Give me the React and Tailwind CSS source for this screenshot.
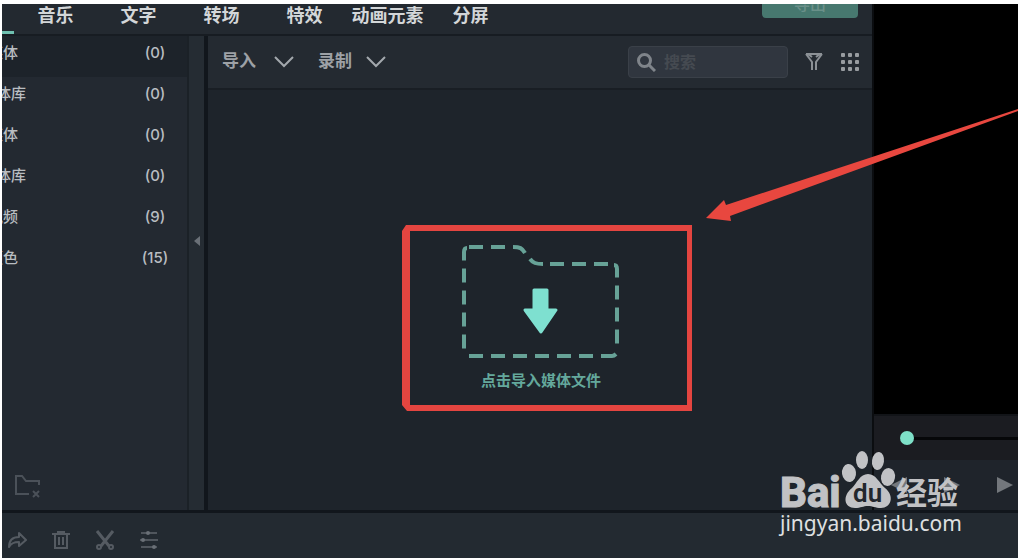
import React, { useState } from 'react'

const tabs = ['音乐', '文字', '转场', '特效', '动画元素', '分屏'];

const folders = [
  { name: '媒体', count: 0 },
  { name: '媒体库', count: 0 },
  { name: '媒体', count: 0 },
  { name: '媒体库', count: 0 },
  { name: '视频', count: 9 },
  { name: '颜色', count: 15 }
];

const Chevron = () => (
  <svg width="20" height="12" viewBox="0 0 20 12" fill="none" stroke="#a3a8ad" strokeWidth="2">
    <path d="M1 1l9 9 9-9" />
  </svg>
);

const Sidebar = () => {
  const [active, setActive] = useState(0);

  return (
    <aside className="w-[187px] shrink-0 flex flex-col justify-between bg-[#232931] border-r-2 border-[#1b2127]">
      <div>
        {folders.map((folder, i) => (
          <button
            key={i}
            onClick={() => setActive(i)}
            className={`w-full h-[41px] pb-[6px] flex items-center justify-between text-[15px] font-medium text-[#b9bdc1] ${active === i ? 'bg-[#1d232a]' : ''}`}
          >
            <span className={`${folder.name.length > 2 ? 'w-6' : 'w-4'} flex justify-end overflow-hidden whitespace-nowrap`}>
              {folder.name}
            </span>
            <span className="w-16 text-center">({folder.count})</span>
          </button>
        ))}
      </div>

      <button aria-label="删除文件夹" className="ml-3 mb-3 w-fit">
        <svg width="28" height="24" viewBox="0 0 28 24" fill="none" stroke="#4b5159" strokeWidth="2">
          <path d="M15 20H2V2h6l4 5h13v4" />
          <path d="M19 17l6 6M25 17l-6 6" />
        </svg>
      </button>
    </aside>
  );
};

const DropZone = () => (
  <div className="flex-1 flex items-center justify-center pt-9 pl-[2px] bg-[#1e242b]">
    <button className="flex flex-col items-center gap-3 text-[15px] leading-5 font-bold text-[#64a89c]">
      <svg width="158" height="114" viewBox="0 0 158 114" fill="none">
        <g stroke="#67a297" strokeWidth="4" strokeDasharray="14 8">
          <path d="M7 2H50" />
          <path d="M51 2C58 2 60 3 63 8M68 14C71 18 74 19 81 19" strokeDasharray="none" />
          <path d="M88 19H150" />
          <path d="M152 20Q155 20 155 24V104" />
          <path d="M7 111H138" />
          <path d="M139 111H150Q152 111 154 109" strokeDasharray="none" />
          <path d="M5 3Q2 3 2 7V106" />
        </g>
        <path
          d="M72 45h13v20h9L79 87 63 65h9z"
          fill="#7ee0d0" stroke="#7ee0d0" strokeWidth="3" strokeLinejoin="round"
        />
      </svg>
      <span>点击导入媒体文件</span>
    </button>
  </div>
);

const MediaPanel = () => (
  <main className="flex-1 flex flex-col">
    <div className="h-[54px] pl-[14px] pr-3 flex items-center bg-[#242a31] border-b-2 border-[#191e24] text-[17px] font-bold text-[#9da1a6]">
      <button className="flex items-center gap-[18px]">导入 <Chevron /></button>
      <button className="ml-6 flex items-center gap-[14px]">录制 <Chevron /></button>

      <label className="ml-auto w-40 h-8 pl-2 flex items-center gap-2 rounded bg-[#30363f] border border-[#3a4048]">
        <svg className="shrink-0" width="19" height="19" viewBox="0 0 19 19" fill="none" stroke="#7f848a" strokeWidth="3">
          <circle cx="7.500" cy="7.500" r="6" />
          <path d="M12 12l6 6" />
        </svg>
        <input
          type="search"
          aria-label="搜索"
          placeholder="搜索"
          className="w-full min-w-0 bg-transparent outline-none text-base placeholder:text-[#454a51]"
        />
      </label>

      <button aria-label="筛选" className="ml-4">
        <svg width="20" height="20" viewBox="0 0 20 20" fill="none" stroke="#8c9196" strokeWidth="2">
          <path d="M2 2h16M2 2l6 8v8M18 2l-6 8v8M4 2l4 3M16 2l-4 3" />
        </svg>
      </button>
      <button aria-label="网格视图" className="ml-4">
        <svg width="20" height="20" viewBox="0 0 20 20" fill="#989ca0">
          {[3, 10, 17].map((y) => [3, 10, 17].map((x) => (
            <rect key={`${x}-${y}`} x={x - 2} y={y - 2} width="4" height="4" rx="1" />
          )))}
        </svg>
      </button>
    </div>

    <DropZone />
  </main>
);

const Play = ({ flip }) => (
  <svg width="18" height="16" viewBox="0 0 18 16" fill="#73777c">
    <path d={flip ? 'M17 0v16L1 8z' : 'M1 0v16l16-8z'} />
  </svg>
);

const Preview = () => {
  const [position, setPosition] = useState(0);

  return (
    <section className="w-[146px] shrink-0 flex flex-col overflow-hidden border-l-2 border-[#0b0d10] bg-[#1f242b]">
      <div className="flex-1 bg-black"></div>
      <div className="h-[46px] pl-[26px] flex items-center bg-[#1b1c21] border-t-2 border-[#121418]">
        <input
          type="range"
          aria-label="播放进度"
          value={position}
          onChange={(e) => setPosition(e.target.value)}
          className="w-full h-4 appearance-none bg-transparent [&::-webkit-slider-runnable-track]:h-[3px] [&::-webkit-slider-runnable-track]:bg-[#060709] [&::-webkit-slider-thumb]:appearance-none [&::-webkit-slider-thumb]:w-[14px] [&::-webkit-slider-thumb]:h-[14px] [&::-webkit-slider-thumb]:-mt-[6px] [&::-webkit-slider-thumb]:rounded-full [&::-webkit-slider-thumb]:bg-[#7ee0c8]"
        />
      </div>
      <div className="h-[50px] pl-4 pr-1 flex items-center justify-between">
        <button aria-label="上一帧"><Play flip /></button>
        <button aria-label="播放"><Play /></button>
        <button aria-label="下一帧"><Play /></button>
      </div>
    </section>
  );
};

const Timeline = () => (
  <footer className="h-12 shrink-0 pl-[5px] flex items-center gap-6 bg-[#232a31] border-t-[3px] border-[#11161c] pt-2">
    <button aria-label="重做">
      <svg width="20" height="20" viewBox="0 0 20 20" fill="none" stroke="#555b62" strokeWidth="2">
        <path d="M2 17C2 10 6 7 12 7V3l7 7-7 6v-4c-5 0-8 1-10 5z" strokeLinejoin="round" />
      </svg>
    </button>
    <button aria-label="删除">
      <svg width="20" height="20" viewBox="0 0 20 20" fill="none" stroke="#555b62" strokeWidth="2">
        <path d="M1 4h18M7 4V2h6v2M4 5v13h12V5M8 7v8M12 7v8" />
      </svg>
    </button>
    <button aria-label="分割">
      <svg width="20" height="20" viewBox="0 0 20 20" fill="none" stroke="#555b62" strokeWidth="2">
        <path d="M2 1l12 15M18 1L6 16" strokeWidth="3" />
        <circle cx="4" cy="17" r="2" />
        <circle cx="16" cy="17" r="2" />
      </svg>
    </button>
    <button aria-label="调整">
      <svg width="20" height="20" viewBox="0 0 20 20" fill="#6a7077" stroke="#50565d" strokeWidth="2">
        <path d="M2 3h16M1 10h18M2 17h16" />
        <circle cx="9" cy="3" r="2" stroke="none" />
        <circle cx="4" cy="10" r="2" stroke="none" />
        <circle cx="15" cy="17" r="2" stroke="none" />
      </svg>
    </button>
  </footer>
);

// red frame and arrow pointing at the import area
const Callout = () => (
  <svg className="absolute left-0 top-0 pointer-events-none" width="1018" height="560" viewBox="0 0 1018 560">
    <path
      fill="#e44540"
      fillRule="evenodd"
      d="M406 225H692V411H407L402 405V231zM410 231V405H687V231z"
    />
    <path fill="#e8473f" d="M706 218L724 200 726 205 1018 109 1018 111 730 216 731 221z" />
  </svg>
);

const Watermark = () => (
  <svg className="absolute right-12 bottom-5 pointer-events-none" width="192" height="92" viewBox="0 0 192 92" fill="#c1c2c5">
    <text x="2" y="59" fontSize="42" fontWeight="800" stroke="#c1c2c5" strokeWidth="1" fontFamily="Roboto, sans-serif">Bai</text>
    <ellipse cx="71" cy="25" rx="7" ry="9" transform="rotate(-8 71 25)" />
    <ellipse cx="84" cy="12" rx="6" ry="9" />
    <ellipse cx="100" cy="13" rx="6" ry="9" transform="rotate(8 100 13)" />
    <ellipse cx="110" cy="29" rx="7" ry="9" transform="rotate(10 110 29)" />
    <path d="M90 26C98 26 101 35 107 40C117 48 113 60 103 60C97 60 95 58 90 58C85 58 83 60 77 60C66 60 64 48 74 40C79 35 82 26 90 26z" />
    <text x="75" y="54" fontSize="26" fontWeight="600" fill="#22262d" fontFamily="Roboto, sans-serif">du</text>
    <text x="118" y="56" fontSize="31" fontWeight="700" fontFamily="'Noto Sans CJK SC', sans-serif">经验</text>
    <text x="2" y="83" fontSize="21" fill="#dfe0e1" fontFamily="'Noto Sans', sans-serif">jingyan.baidu.com</text>
  </svg>
);

const App = () => {
  return (
    <div className="relative h-screen overflow-hidden flex flex-col pt-1 pl-[2px] pb-[2px] bg-white font-[Inter,'Noto_Sans_CJK_SC',sans-serif]">
      <div className="flex-1 min-h-0 flex">
        <div className="flex-1 flex flex-col">
          <header className="h-8 shrink-0 pl-3 pr-[14px] flex items-start bg-[#232930] border-b-2 border-[#171c22] relative">
            <span className="absolute left-0 bottom-0 w-3 h-[3px] bg-[#6fc0b0]"></span>
            <nav className="flex">
              {tabs.map((tab) => (
                <button key={tab} className="w-[83px] text-lg leading-6 font-bold text-[#d3d6d8] whitespace-nowrap">
                  {tab}
                </button>
              ))}
            </nav>
            <div className="ml-auto h-[14px] flex items-end overflow-hidden">
              <button className="w-24 h-7 shrink-0 rounded-sm bg-[#47786f] text-base leading-5 font-medium text-[#6a9089]">
                导出
              </button>
            </div>
          </header>

          <div className="flex-1 min-h-0 flex">
            <Sidebar />
            <button aria-label="收起侧栏" className="w-[15px] shrink-0 flex items-center justify-center bg-[#252c33] pb-16">
              <svg width="6" height="10" viewBox="0 0 6 10" fill="#6a7077">
                <path d="M6 0v10L0 5z" />
              </svg>
            </button>
            <div className="w-1 shrink-0 bg-[#11161c]"></div>
            <MediaPanel />
          </div>
        </div>
        <Preview />
      </div>

      <Timeline />
      <Callout />
      <Watermark />
    </div>
  );
}

export default App
